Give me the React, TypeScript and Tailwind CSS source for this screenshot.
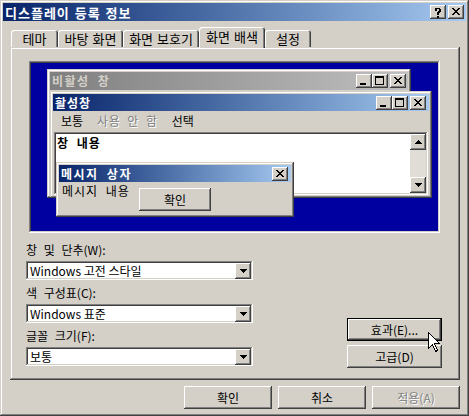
import React from "react";

// classic 3D bevels
const raised =
  "shadow-[inset_-1px_-1px_#404040,inset_1px_1px_#ffffff,inset_-2px_-2px_#808080,inset_2px_2px_#d4d0c8]";
const sunken =
  "shadow-[inset_-1px_-1px_#ffffff,inset_1px_1px_#808080,inset_-2px_-2px_#d4d0c8,inset_2px_2px_#404040]";
const frame =
  "shadow-[inset_-1px_-1px_#404040,inset_1px_1px_#d4d0c8,inset_-2px_-2px_#808080,inset_2px_2px_#ffffff]";
const font = "font-['Noto_Sans_CJK_KR',sans-serif]";
const disabled = "text-[#808080] [text-shadow:1px_1px_#ffffff]";
const wide = "[word-spacing:4px]";

const closeRows: [number, number][][] = [
  [[0, 2], [6, 2]],
  [[1, 2], [5, 2]],
  [[2, 4]],
  [[3, 2]],
  [[2, 4]],
  [[1, 2], [5, 2]],
  [[0, 2], [6, 2]],
];

function CaptionButton({ kind }: { kind: "min" | "max" | "close" | "help" }) {
  return (
    <div className={`w-[16px] h-[14px] bg-[#d4d0c8] ${raised} shrink-0`}>
      <svg width="16" height="14" viewBox="0 0 16 14" shapeRendering="crispEdges">
        {kind === "min" && <rect x="4" y="9" width="6" height="2" fill="#000" />}
        {kind === "max" && (
          <path d="M3 2h9v9H3z M4 4h7v6H4z" fill="#000" fillRule="evenodd" />
        )}
        {kind === "close" &&
          closeRows.map((row, y) =>
            row.map(([x, w]) => (
              <rect key={`${y}-${x}`} x={4 + x} y={3 + y} width={w} height="1" fill="#000" />
            ))
          )}
        {kind === "help" && (
          <path
            d="M5 3h5v1h1v3h-1v1H9v2H7V7h1V6h1V4H7v2H5V4h0z M7 11h2v2H7z"
            fill="#000"
          />
        )}
      </svg>
    </div>
  );
}

function Arrow({ up }: { up?: boolean }) {
  return (
    <svg width="7" height="4" viewBox="0 0 7 4" shapeRendering="crispEdges">
      {up ? (
        <>
          <rect x="3" y="0" width="1" height="1" />
          <rect x="2" y="1" width="3" height="1" />
          <rect x="1" y="2" width="5" height="1" />
          <rect x="0" y="3" width="7" height="1" />
        </>
      ) : (
        <>
          <rect x="0" y="0" width="7" height="1" />
          <rect x="1" y="1" width="5" height="1" />
          <rect x="2" y="2" width="3" height="1" />
          <rect x="3" y="3" width="1" height="1" />
        </>
      )}
    </svg>
  );
}

function ArrowButton({ up }: { up?: boolean }) {
  return (
    <div className={`w-[16px] h-[16px] bg-[#d4d0c8] ${raised} flex items-center justify-center shrink-0`}>
      <Arrow up={up} />
    </div>
  );
}

function Button({
  label,
  w,
  off,
  focused,
}: {
  label: string;
  w: string;
  off?: boolean;
  focused?: boolean;
}) {
  return (
    <div
      className={`${w} h-[23px] bg-[#d4d0c8] flex items-center justify-center text-[12px] leading-none ${
        focused ? "border border-black" : ""
      } ${raised} ${off ? disabled : ""}`}
    >
      {label}
    </div>
  );
}

function Combo({ value }: { value: string }) {
  return (
    <div className={`h-[19px] w-[227px] bg-white ${sunken} p-[2px] flex items-center`}>
      <span className="flex-1 pl-[2px] text-[12px] leading-none">{value}</span>
      <ArrowButton />
    </div>
  );
}

function Field({ label, value }: { label: string; value: string }) {
  return (
    <div className="flex flex-col mb-[5px]">
      <span className={`h-[16px] leading-[16px] text-[12px] ${wide}`}>{label}</span>
      <div className="mt-[3px]">
        <Combo value={value} />
      </div>
    </div>
  );
}

const tabs = [
  { label: "테마", w: "w-[47px]" },
  { label: "바탕 화면", w: "w-[65px]" },
  { label: "화면 보호기", w: "w-[76px]" },
  { label: "화면 배색", w: "w-[66px]", active: true },
  { label: "설정", w: "w-[46px]" },
];

function Preview() {
  return (
    <div className={`relative ml-[19px] w-[411px] h-[172px] bg-[#0000a0] ${sunken} text-[12px]`}>
      {/* inactive window */}
      <div className={`absolute left-[18px] top-[8px] w-[364px] h-[129px] bg-[#d4d0c8] p-[3px] ${frame}`}>
        <div className="h-[18px] flex items-center bg-linear-to-r from-[#808080] to-[#c0c0c0] pl-[2px] pr-[2px]">
          <span className={`font-bold text-[#d4d0c8] leading-none tracking-[1.5px] ${wide}`}>비활성 창</span>
          <div className="ml-auto flex">
            <CaptionButton kind="min" />
            <CaptionButton kind="max" />
            <div className="w-[2px]" />
            <CaptionButton kind="close" />
          </div>
        </div>
      </div>

      {/* active window */}
      <div className={`absolute left-[21px] top-[30px] w-[382px] h-[107px] bg-[#d4d0c8] p-[3px] flex flex-col ${frame}`}>
        <div className="h-[17px] flex items-center bg-linear-to-r from-[#0a246a] to-[#a6caf0] pl-[2px] pr-[3px]">
          <span className="font-bold text-white leading-none tracking-[1px]">활성창</span>
          <div className="ml-auto flex">
            <CaptionButton kind="min" />
            <CaptionButton kind="max" />
            <div className="w-[2px]" />
            <CaptionButton kind="close" />
          </div>
        </div>
        <div className="h-[19px] flex items-center gap-[14px] pl-[8px] leading-none">
          <span>보통</span>
          <span className={`${disabled} tracking-[0.5px] ${wide}`}>사용 안 함</span>
          <span>선택</span>
        </div>
        <div className={`mt-[2px] mx-[1px] h-[63px] bg-white ${sunken} p-[2px] flex`}>
          <span className={`flex-1 font-bold leading-none pt-[3px] pl-[1px] tracking-[1px] ${wide}`}>창 내용</span>
          <div className="w-[16px] flex flex-col justify-between bg-[#e0ddd7]">
            <ArrowButton up />
            <ArrowButton />
          </div>
        </div>
      </div>

      {/* message box */}
      <div className={`absolute left-[27px] top-[101px] w-[238px] h-[55px] bg-[#d4d0c8] p-[3px] flex flex-col ${frame}`}>
        <div className="h-[17px] flex items-center bg-linear-to-r from-[#0a246a] to-[#a6caf0] pl-[2px] pr-[3px]">
          <span className={`font-bold text-white leading-none tracking-[1.5px] ${wide}`}>메시지 상자</span>
          <div className="ml-auto">
            <CaptionButton kind="close" />
          </div>
        </div>
        <div className="flex items-start">
          <span className={`w-[80px] pl-[3px] pt-[3px] leading-none tracking-[1px] ${wide}`}>메시지 내용</span>
          <div className="mt-[6px]">
            <Button label="확인" w="w-[72px]" />
          </div>
        </div>
      </div>
    </div>
  );
}

export default function App() {
  return (
    <div className={`relative w-[469px] h-[416px] bg-[#d4d0c8] p-[3px] ${frame} ${font} text-[12px] text-black`}>
      {/* title bar */}
      <div className="h-[18px] flex items-center bg-linear-to-r from-[#0a246a] to-[#a6caf0] pl-[2px] pr-[2px]">
        <span className="text-white font-bold text-[13px] leading-none tracking-[1px] [word-spacing:1px]">
          디스플레이 등록 정보
        </span>
        <div className="ml-auto flex items-center">
          <CaptionButton kind="help" />
          <div className="w-[2px]" />
          <CaptionButton kind="close" />
        </div>
      </div>

      {/* tabs */}
      <div className="flex items-end h-[26px] pl-[8px]">
        {tabs.map((t) => (
          <div
            key={t.label}
            className={`${t.w} flex items-center justify-center rounded-t-[3px] bg-[#d4d0c8] leading-none text-[13px] [word-spacing:1px] shadow-[inset_1px_1px_#ffffff,inset_-1px_0_#404040,inset_-2px_0_#808080] ${
              t.active ? "h-[21px] -mb-[1px] relative z-10 pb-[2px]" : "h-[17px]"
            }`}
          >
            {t.label}
          </div>
        ))}
      </div>

      {/* tab page */}
      <div className={`ml-[7px] w-[450px] h-[333px] pt-[14px] flex flex-col ${frame}`}>
        <Preview />
        <div className="flex">
          <div className="ml-[16px] mt-[9px] flex flex-col">
            <Field label="창 및 단추(W):" value="Windows 고전 스타일" />
            <Field label="색 구성표(C):" value="Windows 표준" />
            <Field label="글꼴 크기(F):" value="보통" />
          </div>
          <div className="ml-auto mr-[18px] mt-[85px] flex flex-col gap-[4px]">
            <Button label="효과(E)..." w="w-[95px]" focused />
            <Button label="고급(D)" w="w-[95px]" />
          </div>
        </div>
      </div>

      {/* dialog buttons */}
      <div className="flex justify-end gap-[6px] mt-[6px] pr-[6px]">
        <Button label="확인" w="w-[88px]" />
        <Button label="취소" w="w-[88px]" />
        <Button label="적용(A)" w="w-[88px]" off />
      </div>

      {/* mouse pointer */}
      <svg
        className="absolute left-[428px] top-[332px]"
        width="13"
        height="21"
        viewBox="0 0 13 21"
        shapeRendering="crispEdges"
      >
        <path
          d="M0.5 0.5 L0.5 16.5 L4.5 12.5 L7.5 19.5 L9.5 18.5 L6.5 11.5 L11.5 11.5 Z"
          fill="#ffffff"
          stroke="#000000"
          strokeWidth="1"
        />
      </svg>
    </div>
  );
}
